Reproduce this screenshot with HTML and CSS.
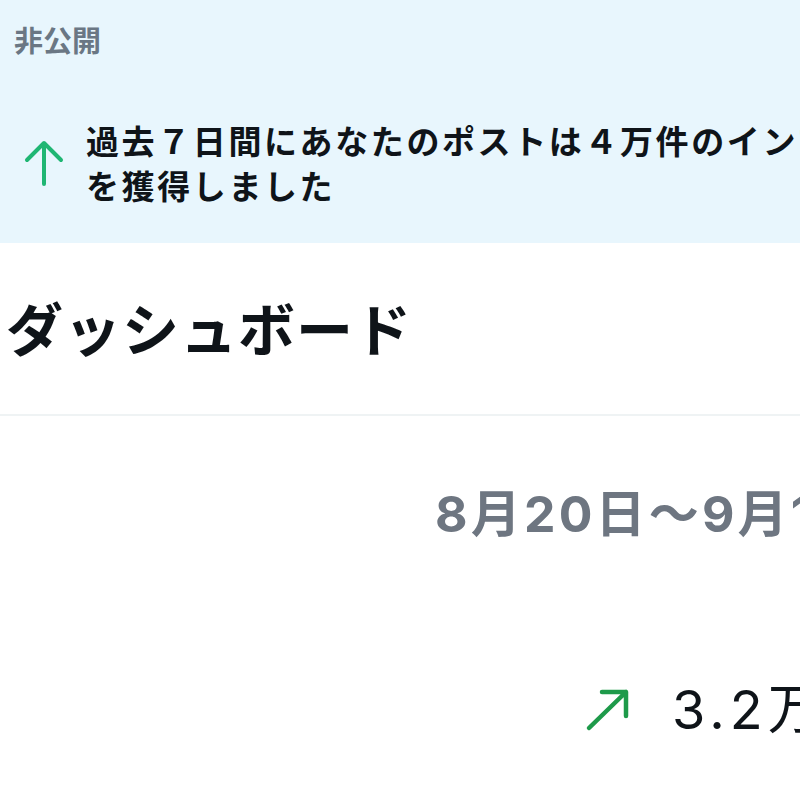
FILE: index.html
```html
<!DOCTYPE html>
<html lang="ja">
<head>
<meta charset="utf-8">
<link rel="stylesheet" href="styles.css">
</head>
<body>
<div class="page">
  <section class="banner">
    <div class="label">非公開</div>
    <div class="insight">
      <svg class="up-arrow" width="40" height="46" viewBox="0 0 40 46" aria-hidden="true">
        <path d="M20 44 V4 M3 20 L20 3 L37 20" fill="none" stroke="#1fb673" stroke-width="4" stroke-linecap="round" stroke-linejoin="round"/>
      </svg>
      <div class="insight-text">
        <div>過去７日間にあなたのポストは４万件のインプレッション</div>
        <div>を獲得しました</div>
      </div>
    </div>
  </section>
  <header class="title-bar">
    <h1 class="title">ダッシュボード</h1>
  </header>
  <div class="date">8月20日～9月19日</div>
  <div class="stat">
    <svg class="diag-arrow" width="46" height="44" viewBox="0 0 46 44" aria-hidden="true">
      <path d="M4 40 L41 4 M17 4 H41 V28" fill="none" stroke="#1e9a4a" stroke-width="4.5" stroke-linecap="round" stroke-linejoin="round"/>
    </svg>
    <span class="stat-value">3.2万</span>
  </div>
</div>
</body>
</html>
```
FILE: styles.css
```css
html, body {
  margin: 0;
  padding: 0;
  background: #ffffff;
}
body {
  width: 800px;
  height: 800px;
  overflow: hidden;
  font-family: "Noto Sans CJK JP", sans-serif;
  color: #0f1419;
}
.page {
  width: 800px;
  overflow: hidden;
}
.banner {
  background: #e8f6fd;
  height: 243px;
  box-sizing: border-box;
  padding: 21px 0 0 14px;
}
.label {
  font-size: 29px;
  line-height: 36px;
  font-weight: 700;
  color: #6a7784;
}
.insight {
  display: flex;
  align-items: center;
  gap: 22px;
  margin-top: 61px;
  padding-left: 10px;
}
.up-arrow {
  flex: none;
}
.insight-text {
  white-space: nowrap;
  font-size: 33px;
  line-height: 45px;
  letter-spacing: 2.6px;
  font-weight: 700;
  color: #0f1419;
}
.title-bar {
  border-bottom: 2px solid #eff3f4;
  height: 173px;
  box-sizing: border-box;
  padding: 48px 0 0 6px;
}
.title {
  margin: 0;
  font-size: 57px;
  line-height: 70px;
  font-weight: 700;
  letter-spacing: 1px;
  white-space: nowrap;
}
.date {
  margin-top: 68px;
  padding-left: 435px;
  white-space: nowrap;
  font-family: "Inter", "Noto Sans CJK JP", sans-serif;
  font-size: 50px;
  line-height: 60px;
  font-weight: 700;
  color: #6e7681;
  letter-spacing: 3.2px;
}
.stat {
  display: flex;
  align-items: center;
  gap: 41px;
  margin-top: 136px;
  padding-left: 585px;
  white-space: nowrap;
}
.diag-arrow {
  flex: none;
}
.stat-value {
  font-family: "Inter", "Noto Sans CJK JP", sans-serif;
  font-size: 54px;
  line-height: 60px;
  font-weight: 400;
  letter-spacing: 5px;
  color: #0f1419;
}
```
